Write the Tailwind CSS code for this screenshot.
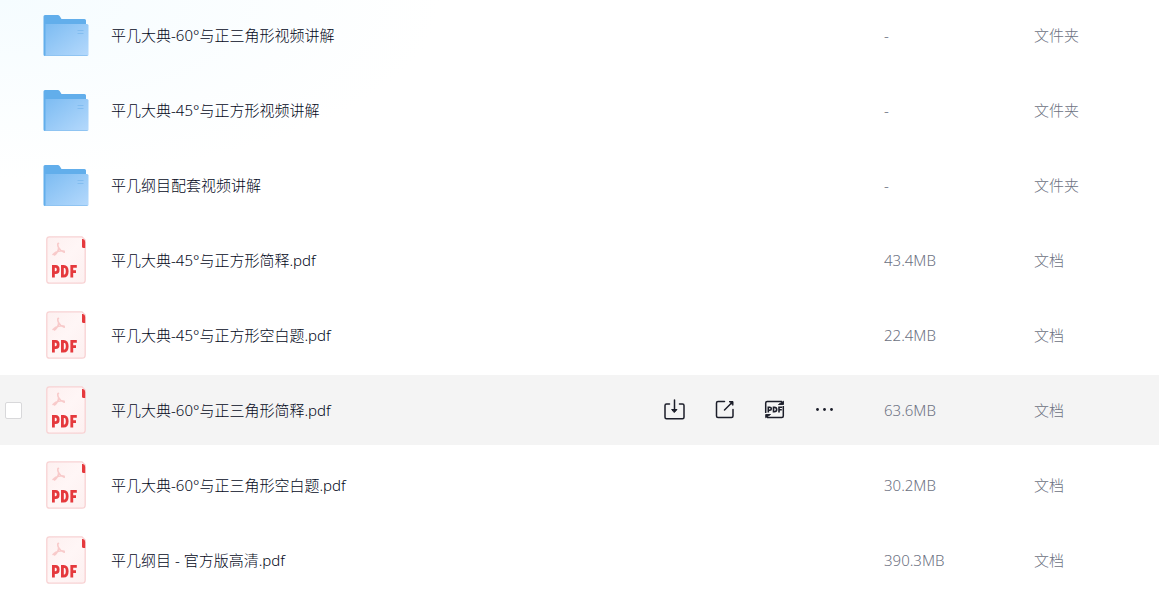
<!DOCTYPE html>
<html lang="zh-CN">
<head>
<meta charset="utf-8">
<meta name="viewport" content="width=device-width, initial-scale=1">
<title>文件列表</title>
<script src="https://cdn.jsdelivr.net/npm/@tailwindcss/browser@4"></script>
</head>
<body class="min-h-screen overflow-x-hidden bg-white bg-[radial-gradient(ellipse_440px_180px_at_0_0,#f5fcff,#ffffff)] bg-no-repeat font-['Noto_Sans','Noto_Sans_CJK_SC',sans-serif] text-[15px] leading-5 font-light text-[#03081a]">

<svg class="absolute size-0" aria-hidden="true">
  <defs>
    <linearGradient id="front" x1="0" y1="0" x2="1" y2="1">
      <stop offset="0" stop-color="#7dbcf2"/><stop offset="1" stop-color="#b5d9fc"/>
    </linearGradient>
    <linearGradient id="paper" x1="0" y1="0" x2="1" y2="1">
      <stop offset="0" stop-color="#fdf0f0"/><stop offset=".5" stop-color="#fff6f6"/><stop offset="1" stop-color="#fdf0f0"/>
    </linearGradient>
    <symbol id="folder" viewBox="0 -1 46 42">
      <path d="M.5 1.500Q.5 0 2 0H14.500Q16 0 16.800 1.200L18.500 4H41.500Q43 4 43 5.500V41H2Q.5 41 .5 39.500Z" fill="#62aeeb"/>
      <path d="M2.500 9H44Q45.500 9 45.500 10.500V39.500Q45.500 41 44 41H2.500Z" fill="url(#front)"/>
      <path d="M2.500 40.500H44.500" stroke="#8fc4f2" stroke-width="1"/>
      <path d="M34.500 15.500H40.500M34.500 18.500H40.500" stroke="#82bdf0" stroke-width="1"/>
    </symbol>
    <symbol id="pdf" viewBox="0 0 40 48">
      <path d="M3.500 .8H36L39.200 4V44Q39.200 47.200 36 47.200H3.500Q.8 47.200 .8 44.500V3.500Q.8 .8 3.500 .8Z" fill="url(#paper)" stroke="#f8d2d3" stroke-width="1.300"/>
      <path d="M36 3H37Q39.200 3.500 39.200 6V12H37.500Q36 12 36 10.500Z" fill="#e5393d"/>
      <path d="M12.500 7.500C11.500 7 11.500 9.500 12.500 11.500C13.500 13.500 16 15.500 18.200 16.200M18.200 15.200C15 14 10 15.500 7 18.500M12.700 11.500C12.500 14 10.500 17.500 8.500 19" fill="none" stroke="#f8caca" stroke-width="1.600" stroke-linecap="round"/>
      <path d="M7.400 41.500V30.300H9.500Q12.200 30.300 12.200 33.500T9.500 36.700H7.400M16.400 30.300V40.200H17.500Q21.200 40.200 21.200 35.200T17.500 30.300ZM25.800 41.500V30.300H30.800M25.800 35.700H30" fill="none" stroke="#e5393d" stroke-width="2.800"/>
    </symbol>
  </defs>
</svg>

<table class="-mt-[5px] w-full table-fixed border-separate border-spacing-x-0 border-spacing-y-[5px] text-left">
  <colgroup>
    <col class="w-[43px]"><col class="w-[68px]"><col><col class="w-[220px]"><col class="w-[150px]"><col class="w-[125px]">
  </colgroup>
  <tbody id="files"></tbody>
</table>

<template id="actions">
  <div class="flex items-center gap-7 text-[#1b1d29]">
    <button type="button" aria-label="下载" class="size-[22px]">
      <svg viewBox="0 0 22 22" class="size-[22px]" fill="none" stroke="currentColor" stroke-width="1.500" stroke-linecap="round" stroke-linejoin="round"><path d="M5.500 5H2.500Q1 5 1 6.500V18.200Q1 19.700 2.500 19.700H18.500Q20 19.700 20 18.200V6.500Q20 5 18.500 5H15.500M10.500 1V12"/><path d="M8 10.500H13L10.500 13.300Z" fill="currentColor" stroke-width="1"/></svg>
    </button>
    <button type="button" aria-label="分享" class="size-[22px]">
      <svg viewBox="0 1 22 22" class="size-[22px]" fill="none" stroke="currentColor" stroke-width="1.500" stroke-linecap="round" stroke-linejoin="round"><path d="M10.500 3.500H4Q2.500 3.500 2.500 5V18Q2.500 19.500 4 19.500H17.500Q19 19.500 19 18V11.500M10.500 12L17.500 5"/><path d="M15.500 3.500H19V7Z" fill="currentColor" stroke-width="1"/></svg>
    </button>
    <button type="button" aria-label="PDF转换" class="size-[22px]">
      <svg viewBox="0 1 22 22" class="size-[22px]" fill="none" stroke="currentColor" stroke-width="1.500" stroke-linejoin="round"><path d="M1.700 15V5Q1.700 3.500 3.200 3.500H18M19.300 8V18Q19.300 19.500 17.800 19.500H3"/><path d="M14.500 6.500L19.500 3.200V6.500ZM6.500 16.500L1.700 19.700V16.500Z" fill="currentColor" stroke-width=".9"/><path d="M4.300 14.500V9.200H5.700Q7.300 9.200 7.300 10.700T5.700 12.300H4.300M9.500 9.200V13.700H10.300Q12.700 13.700 12.700 11.500T10.300 9.200ZM15 14.500V9.200H18.200M15 11.700H17.800" stroke-width="1.600" stroke-linejoin="miter"/></svg>
    </button>
    <button type="button" aria-label="更多" class="size-[22px]">
      <svg viewBox="0 1 22 22" class="size-[22px]" fill="currentColor"><circle cx="3.500" cy="11.500" r="1.400"/><circle cx="10.500" cy="11.500" r="1.400"/><circle cx="17.500" cy="11.500" r="1.400"/></svg>
    </button>
  </div>
</template>

<script>
const files = [
  ["平几大典-60°与正三角形视频讲解", "-"],
  ["平几大典-45°与正方形视频讲解", "-"],
  ["平几纲目配套视频讲解", "-"],
  ["平几大典-45°与正方形简释.pdf", "43.4MB"],
  ["平几大典-45°与正方形空白题.pdf", "22.4MB"],
  ["平几大典-60°与正三角形简释.pdf", "63.6MB", true],
  ["平几大典-60°与正三角形空白题.pdf", "30.2MB"],
  ["平几纲目 - 官方版高清.pdf", "390.3MB"]
];
const folderIcon = '<svg class="block h-[42px] w-[46px]" aria-hidden="true"><use href="#folder"/></svg>';
const pdfIcon = '<svg class="ml-[3px] block h-12 w-10" aria-hidden="true"><use href="#pdf"/></svg>';
const actions = document.getElementById("actions").innerHTML;
document.getElementById("files").innerHTML = files.map(([name, size, active]) => `
  <tr class="h-[70px] ${active ? "bg-[#f4f4f4]" : ""}">
    <td class="p-0 pl-[5px]">${active ? `<input type="checkbox" aria-label="选择 ${name}" class="block size-[17px] appearance-none rounded-xs border border-[#d8d8da] bg-white">` : ""}</td>
    <td class="p-0">${size === "-" ? folderIcon : pdfIcon}</td>
    <td class="truncate p-0"><a href="#">${name}</a></td>
    <td class="p-0">${active ? actions : ""}</td>
    <td class="p-0 text-[#6c7182]">${size}</td>
    <td class="p-0 text-[#6c7182]">${size === "-" ? "文件夹" : "文档"}</td>
  </tr>`).join("");
</script>
</body>
</html>
